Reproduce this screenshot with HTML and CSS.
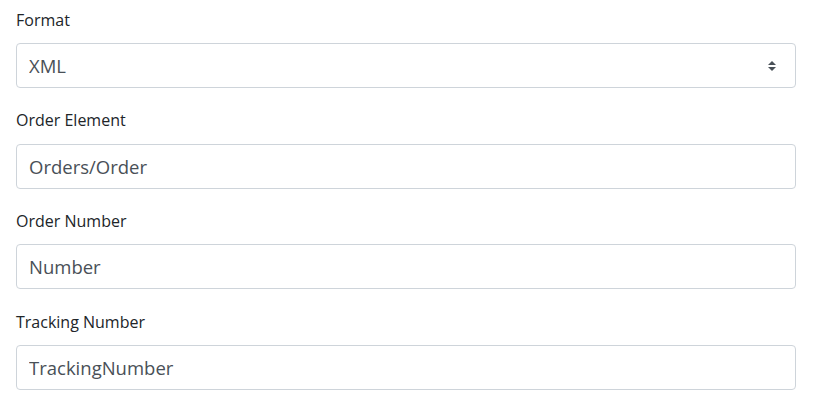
FILE: index.html
```html
<!DOCTYPE html>
<html>
<head>
<meta charset="utf-8">
<link rel="stylesheet" href="styles.css">
</head>
<body>
<form class="form">
  <div class="group">
    <label class="label">Format</label>
    <select class="control select"><option>XML</option></select>
  </div>
  <div class="group">
    <label class="label">Order Element</label>
    <input class="control" type="text" value="Orders/Order">
  </div>
  <div class="group">
    <label class="label">Order Number</label>
    <input class="control" type="text" value="Number">
  </div>
  <div class="group">
    <label class="label">Tracking Number</label>
    <input class="control" type="text" value="TrackingNumber">
  </div>
</form>
</body>
</html>
```
FILE: styles.css
```css
html, body {
  margin: 0;
  padding: 0;
  background: #fff;
}
body {
  font-family: "Open Sans", "Noto Sans", sans-serif;
  color: #212529;
}
.form {
  padding: 7.5px 19px 0 16px;
  display: flex;
  flex-direction: column;
  gap: 20.2px;
}
.group {
  display: flex;
  flex-direction: column;
}
.label {
  font-size: 16px;
  line-height: 24px;
  margin-bottom: 11.5px;
}
.control {
  box-sizing: border-box;
  height: 45px;
  width: 780px;
  margin: 0;
  padding: 0 12px;
  border: 1px solid #ced4da;
  border-radius: 4px;
  background: #fff;
  color: #495057;
  font-family: "Open Sans", "Noto Sans", sans-serif;
  font-size: 18.5px;
  outline: none;
}
.select {
  appearance: none;
  -webkit-appearance: none;
  background-image: url("data:image/svg+xml,%3csvg xmlns='http://www.w3.org/2000/svg' width='4' height='5' viewBox='0 0 4 5'%3e%3cpath fill='%23495057' d='M2 0L0 2h4zm0 5L0 3h4z'/%3e%3c/svg%3e");
  background-repeat: no-repeat;
  background-position: right 19px center;
  background-size: 8px 10px;
}
```
